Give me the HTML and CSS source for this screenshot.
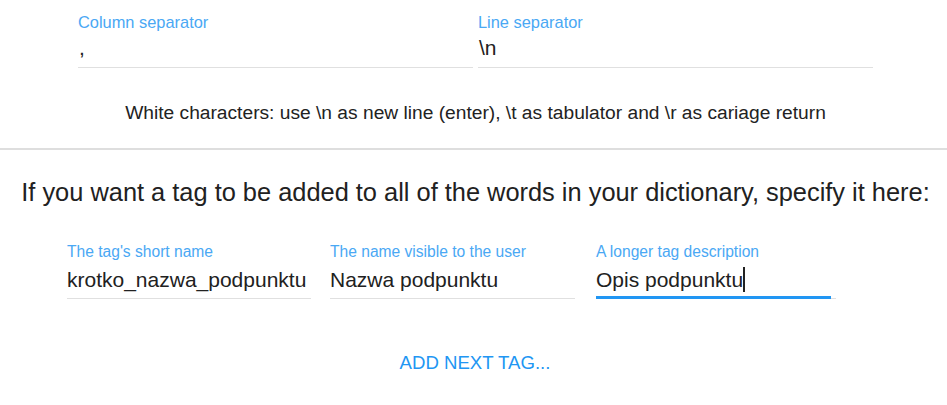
FILE: index.html
```html
<!DOCTYPE html>
<html>
<head>
<meta charset="utf-8">
<link rel="stylesheet" href="styles.css">
</head>
<body>
<div class="sep-row">
  <div class="field sep-field">
    <div class="label">Column separator</div>
    <div class="value">,</div>
  </div>
  <div class="field sep-field">
    <div class="label">Line separator</div>
    <div class="value">\n</div>
  </div>
</div>
<p class="hint">White characters: use \n as new line (enter), \t as tabulator and \r as cariage return</p>
<hr class="divider">
<h2 class="heading">If you want a tag to be added to all of the words in your dictionary, specify it here:</h2>
<div class="tag-row">
  <div class="field tag-a">
    <div class="label">The tag's short name</div>
    <div class="value">krotko_nazwa_podpunktu</div>
  </div>
  <div class="field tag-b">
    <div class="label">The name visible to the user</div>
    <div class="value">Nazwa podpunktu</div>
  </div>
  <div class="field tag-c focused">
    <div class="label">A longer tag description</div>
    <div class="value">Opis podpunktu<span class="caret"></span></div>
  </div>
</div>
<div class="actions">
  <button class="add-btn">ADD NEXT TAG...</button>
</div>
</body>
</html>
```
FILE: styles.css
```css
html, body {
  margin: 0;
  padding: 0;
  background: #ffffff;
  font-family: "Liberation Sans", Arial, sans-serif;
  color: #212121;
}

.sep-row {
  display: flex;
  justify-content: center;
  gap: 5px;
  padding-top: 13px;
  padding-left: 4px;
}

.field {
  display: flex;
  flex-direction: column;
}

.sep-field {
  width: 395px;
}

.label {
  font-size: 15.6px;
  line-height: 18px;
  color: #4aa8f4;
  margin-bottom: 4px;
  white-space: nowrap;
}

.sep-field .label {
  font-size: 16.4px;
}

.value {
  font-size: 21px;
  line-height: 26px;
  padding-bottom: 6px;
  border-bottom: 1px solid #e0e0e0;
  color: #212121;
  white-space: nowrap;
  position: relative;
}

.sep-field .value {
  padding-left: 1px;
}

.hint {
  margin: 34px 0 0;
  text-align: center;
  font-size: 19.2px;
  line-height: 22px;
  color: #222222;
  padding-left: 4px;
}

.divider {
  margin: 24px 0 0;
  border: 0;
  height: 2px;
  background: #dedede;
}

.heading {
  margin: 27px 0 0;
  font-weight: normal;
  text-align: center;
  font-size: 25.4px;
  line-height: 30px;
  color: #212121;
  padding-left: 4px;
}

.tag-row {
  display: flex;
  gap: 19px;
  padding-left: 67px;
  margin-top: 36px;
}

.tag-row .label {
  margin-bottom: 6px;
}

.tag-row .value {
  padding-bottom: 5px;
}

.tag-a { width: 244px; }
.tag-b { width: 245px; }
.tag-c { width: 240px; margin-left: 2px; }

.focused .value::after {
  content: "";
  position: absolute;
  left: 0;
  right: 5px;
  bottom: -1px;
  height: 3px;
  background: #2196f3;
}

.caret {
  display: inline-block;
  width: 1.5px;
  height: 25px;
  background: #222222;
  vertical-align: -5px;
}

.actions {
  display: flex;
  justify-content: center;
  margin-top: 49px;
  padding-left: 3px;
}

.add-btn {
  border: 0;
  background: transparent;
  font-family: "Liberation Sans", Arial, sans-serif;
  font-size: 18.6px;
  line-height: 22px;
  color: #2196f3;
  padding: 4px 10px;
  cursor: pointer;
}
```
